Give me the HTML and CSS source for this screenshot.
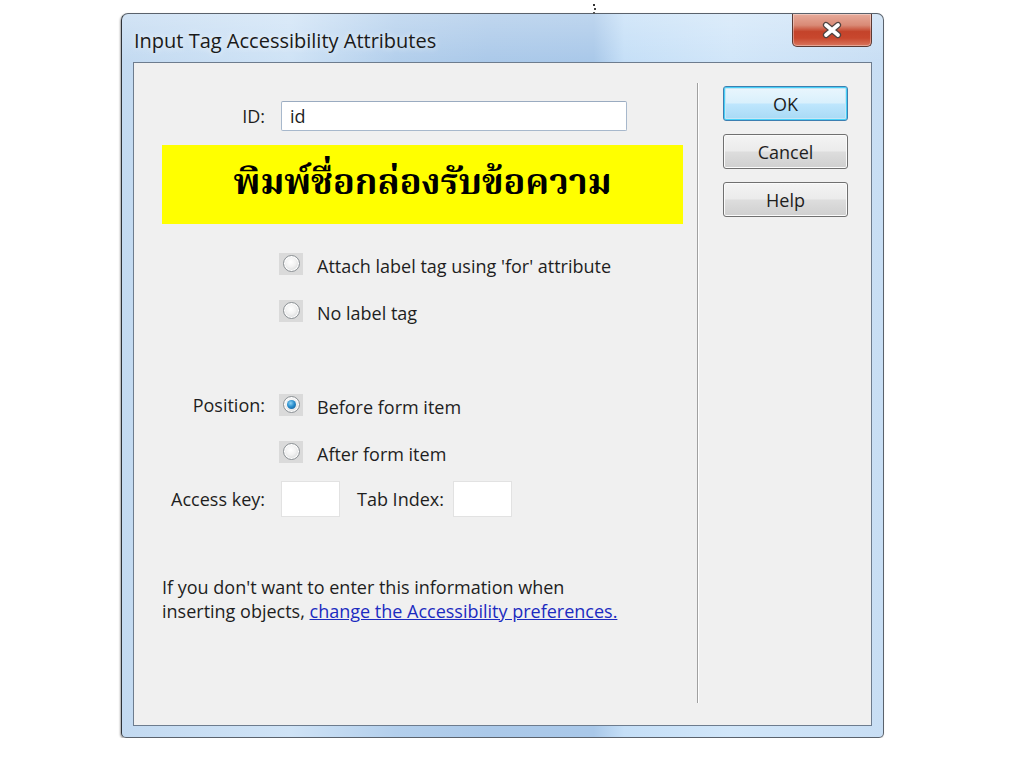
FILE: index.html
```html
<!DOCTYPE html>
<html lang="en">
<head>
<meta charset="utf-8">
<title>Input Tag Accessibility Attributes</title>
<link rel="stylesheet" href="styles.css">
</head>
<body>
<div class="speck"></div>
<div class="dialog">
  <div class="titlebar">
    <span class="title">Input Tag Accessibility Attributes</span>
    <button class="close" aria-label="Close">
      <svg width="24" height="18" viewBox="0 0 24 18">
        <path d="M6 4 L18 14 M18 4 L6 14" stroke="#4e4442" stroke-width="6.2" stroke-linecap="round"/>
        <path d="M6 4 L18 14 M18 4 L6 14" stroke="#ffffff" stroke-width="3.8" stroke-linecap="round"/>
      </svg>
    </button>
  </div>
  <div class="client">
    <div class="form">
      <div class="row field-row">
        <span class="lbl">ID:</span>
        <span class="textbox wide">id</span>
      </div>
      <div class="row field-row label-row">
        <span class="lbl"></span>
        <span class="textbox wide"></span>
      </div>
      <div class="row radio-row wrap-row">
        <span class="lbl"></span>
        <span class="radio"><span class="dot"></span></span>
        <span class="rtext">Wrap with label tag</span>
      </div>
      <div class="row radio-row">
        <span class="lbl"></span>
        <span class="radio"><span class="dot"></span></span>
        <span class="rtext">Attach label tag using 'for' attribute</span>
      </div>
      <div class="row radio-row">
        <span class="lbl"></span>
        <span class="radio"><span class="dot"></span></span>
        <span class="rtext">No label tag</span>
      </div>
      <div class="row radio-row"></div>
      <div class="row radio-row">
        <span class="lbl">Position:</span>
        <span class="radio checked"><span class="dot"></span></span>
        <span class="rtext">Before form item</span>
      </div>
      <div class="row radio-row">
        <span class="lbl"></span>
        <span class="radio"><span class="dot"></span></span>
        <span class="rtext">After form item</span>
      </div>
      <div class="row key-row">
        <span class="lbl">Access key:</span>
        <span class="textbox small"></span>
        <span class="lbl2">Tab Index:</span>
        <span class="textbox small"></span>
      </div>
      <p class="note">If you don't want to enter this information when<br>inserting objects, <a href="#">change the Accessibility preferences.</a></p>
      <div class="banner">พิมพ์ชื่อกล่องรับข้อความ</div>
    </div>
    <div class="sep"></div>
    <div class="buttons">
      <button class="btn default">OK</button>
      <button class="btn">Cancel</button>
      <button class="btn">Help</button>
    </div>
  </div>
</div>
</body>
</html>
```

FILE: styles.css
```css
html, body {
  margin: 0;
  padding: 0;
  background: #ffffff;
}

body {
  font-family: "Open Sans", "Noto Sans", "DejaVu Sans", sans-serif;
  font-size: 18px;
  color: #1e1e1e;
  position: relative;
}

.speck {
  position: absolute;
  left: 593px;
  top: 4px;
  width: 2px;
  height: 2px;
  background: #333333;
  box-shadow: 1px 4px 0 #444444, 0 8px 0 #555555;
}

.dialog {
  box-sizing: border-box;
  margin: 13px 0 0 121px;
  width: 763px;
  height: 725px;
  border: 1px solid #5a626c;
  border-left-color: #2e3238;
  border-radius: 7px 7px 5px 5px;
  background:
    linear-gradient(180deg, rgba(255,255,255,0.25) 0, rgba(255,255,255,0) 48px),
    linear-gradient(90deg, #c3daf1 0, #cfe3f6 22%, #b3cfec 36%, #abc9e9 48%, #a9c8e9 62%, #c5dff7 66%, #d1e6f9 80%, #c8def4 100%);
  padding: 0 11px 11px 11px;
  display: flex;
  flex-direction: column;
  box-shadow: -1px 1px 2px rgba(0,0,0,0.35);
}

.titlebar {
  height: 48px;
  display: flex;
  align-items: flex-start;
  justify-content: space-between;
  flex: none;
}

.title {
  margin-top: 13px;
  margin-left: 1px;
  font-size: 20px;
  color: #1a1a1a;
  text-shadow: 0 0 6px rgba(255,255,255,0.9);
}

.close {
  margin-top: 0;
  width: 80px;
  height: 33px;
  border: 1px solid #5b3a34;
  border-top: none;
  border-radius: 0 0 5px 5px;
  background: linear-gradient(180deg, #e7ab9b 0, #d98a76 35%, #c4432a 55%, #c8472d 75%, #d9765e 100%);
  box-shadow: inset 0 0 0 1px rgba(255,255,255,0.35);
  display: flex;
  align-items: center;
  justify-content: center;
  padding: 0;
}

.client {
  flex: 1;
  border: 1px solid #6d7c8e;
  background: #f0f0f0;
  display: flex;
  position: relative;
}

.form {
  width: 563px;
  padding-top: 38px;
  position: relative;
}

.row {
  display: flex;
  align-items: center;
}

.lbl {
  width: 131px;
  text-align: right;
  flex: none;
  margin-right: 16px;
  white-space: nowrap;
}

.field-row {
  height: 30px;
}

.label-row {
  margin-top: 19px;
  margin-bottom: 13px;
  visibility: hidden;
}

.textbox {
  box-sizing: border-box;
  display: flex;
  align-items: center;
  background: #ffffff;
  padding-left: 8px;
}

.textbox.wide {
  width: 346px;
  height: 30px;
  border: 1px solid #a7b8cc;
  border-top-color: #9aabc0;
  border-radius: 2px;
}

.radio-row {
  height: 47px;
}

.wrap-row {
  margin-top: -6px;
  height: 53px;
  align-items: flex-start;
  padding-top: 6px;
  box-sizing: border-box;
}

.radio {
  width: 24px;
  height: 22px;
  margin-left: -2px;
  background: #dadada;
  display: flex;
  align-items: center;
  justify-content: center;
  flex: none;
}

.radio .dot {
  box-sizing: border-box;
  width: 17px;
  height: 17px;
  border-radius: 50%;
  border: 1px solid #8d9296;
  background: radial-gradient(circle at 45% 40%, #ffffff 0, #f2f2f2 40%, #c9cbcd 100%);
  box-shadow: inset 0 0 0 1px #ffffff;
  position: relative;
}

.radio.checked .dot::after {
  content: "";
  position: absolute;
  left: 3px;
  top: 3px;
  width: 9px;
  height: 9px;
  border-radius: 50%;
  background: radial-gradient(circle at 40% 35%, #8fd2f4 0, #2a8fce 45%, #0e4f8a 100%);
}

.rtext {
  margin-left: 14px;
  padding-top: 5px;
  white-space: nowrap;
}

.wrap-row .rtext {
  padding-top: 0;
  line-height: 24px;
}

.key-row {
  margin-top: 6px;
  height: 36px;
}

.textbox.small {
  width: 59px;
  height: 36px;
  border: 1px solid #e2e2e2;
}

.lbl2 {
  margin: 0 9px 0 17px;
  white-space: nowrap;
}

.note {
  margin: 58px 0 0 28px;
  line-height: 24px;
  white-space: nowrap;
}

.note a {
  color: #1c2bc0;
  text-decoration: underline;
}

.banner {
  position: absolute;
  left: 28px;
  top: 82px;
  width: 521px;
  height: 79px;
  background: #ffff00;
  display: flex;
  align-items: center;
  justify-content: center;
  font-family: "Noto Serif Thai", "Norasi", "Noto Sans Thai", "Garuda", "Loma", "DejaVu Serif", serif;
  font-weight: bold;
  font-size: 36px;
  color: #000000;
}

.sep {
  width: 1px;
  margin-top: 20px;
  height: 620px;
  background: #a0a0a0;
  border-right: 1px solid #ffffff;
  flex: none;
}

.buttons {
  margin-left: 24px;
  padding-top: 23px;
  display: flex;
  flex-direction: column;
  gap: 13px;
}

.btn {
  width: 125px;
  height: 35px;
  font-family: "Open Sans", "Noto Sans", sans-serif;
  font-size: 18px;
  color: #1e1e1e;
  border: 1px solid #707070;
  border-radius: 3px;
  background: linear-gradient(180deg, #f4f4f4 0, #ebebeb 48%, #dddddd 52%, #cfcfcf 100%);
  box-shadow: inset 0 0 0 1px #fbfbfb;
  padding: 0;
}

.btn.default {
  border-color: #3c7fb1;
  box-shadow: inset 0 0 0 1px #48d0f7, inset 0 0 0 2px #c6e6f5;
  background: linear-gradient(180deg, #eaf6fd 0, #d9f0fc 48%, #bee6fd 52%, #a7d9f5 100%);
}
```
